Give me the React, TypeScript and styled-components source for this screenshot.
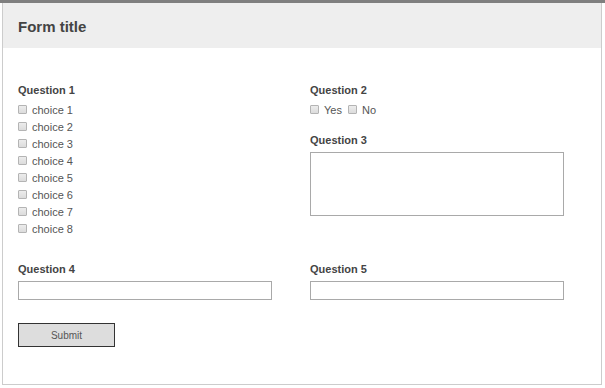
import React from "react";
import styled, { createGlobalStyle } from "styled-components";

const GlobalStyle = createGlobalStyle`
  html, body {
    margin: 0;
    padding: 0;
    background: #ffffff;
  }
  body {
    font-family: "Liberation Sans", Arial, sans-serif;
  }
  * { box-sizing: border-box; }
`;

const TopBar = styled.div`
  height: 3px;
  background: #7f7f7f;
`;

const Card = styled.div`
  margin-left: 2px;
  width: 600px;
  border: 1px solid #cccccc;
  border-top: 0;
  background: #ffffff;
`;

const Header = styled.header`
  background: #eeeeee;
  padding: 15px 15px 12px;
`;

const Title = styled.h1`
  margin: 0;
  font-size: 15px;
  line-height: 18px;
  font-weight: bold;
  color: #444444;
`;

const Body = styled.form`
  padding: 36px 15px 37px;
`;

const Grid = styled.div`
  display: grid;
  grid-template-columns: 292px 292px;
  row-gap: 26px;
  align-items: start;
`;

const Column = styled.div`
  display: flex;
  flex-direction: column;
  gap: 16px;
`;

const Question = styled.div`
  display: flex;
  flex-direction: column;
  align-items: flex-start;
`;

const Label = styled.div`
  font-size: 11px;
  line-height: 13px;
  font-weight: bold;
  color: #444444;
  margin-bottom: 5px;
`;

const ChoiceList = styled.div<{ $inline?: boolean }>`
  display: flex;
  flex-direction: ${(p) => (p.$inline ? "row" : "column")};
  gap: ${(p) => (p.$inline ? "6px" : "0")};
  margin-top: -1px;
`;

const ChoiceRow = styled.label`
  display: flex;
  align-items: center;
  gap: 5px;
  height: 17px;
  font-size: 11px;
  color: #555555;
`;

const Box = styled.span`
  width: 9px;
  height: 9px;
  border: 1px solid #b4b4b4;
  border-radius: 1px;
  background: linear-gradient(#ececec, #dcdcdc);
  flex: none;
`;

const TextArea = styled.div`
  width: 254px;
  height: 64px;
  border: 1px solid #a9a9a9;
  background: #ffffff;
`;

const TextInput = styled.div`
  width: 254px;
  height: 19px;
  border: 1px solid #a9a9a9;
  background: #ffffff;
`;

const SubmitButton = styled.button`
  margin-top: 23px;
  width: 97px;
  height: 24px;
  border: 1px solid #333333;
  background: #dddddd;
  font-family: "Liberation Sans", Arial, sans-serif;
  font-size: 10px;
  color: #555555;
  padding: 0;
  display: block;
`;

const Choice = ({ text }: { text: string }) => (
  <ChoiceRow>
    <Box />
    <span>{text}</span>
  </ChoiceRow>
);

export default function App() {
  const choices = Array.from({ length: 8 }, (_, i) => `choice ${i + 1}`);
  return (
    <>
      <GlobalStyle />
      <TopBar />
      <Card>
        <Header>
          <Title>Form title</Title>
        </Header>
        <Body onSubmit={(e) => e.preventDefault()}>
          <Grid>
            <Question>
              <Label>Question 1</Label>
              <ChoiceList>
                {choices.map((c) => (
                  <Choice key={c} text={c} />
                ))}
              </ChoiceList>
            </Question>
            <Column>
              <Question>
                <Label>Question 2</Label>
                <ChoiceList $inline>
                  <Choice text="Yes" />
                  <Choice text="No" />
                </ChoiceList>
              </Question>
              <Question>
                <Label>Question 3</Label>
                <TextArea />
              </Question>
            </Column>
            <Question>
              <Label>Question 4</Label>
              <TextInput />
            </Question>
            <Question>
              <Label>Question 5</Label>
              <TextInput />
            </Question>
          </Grid>
          <SubmitButton type="submit">Submit</SubmitButton>
        </Body>
      </Card>
    </>
  );
}
